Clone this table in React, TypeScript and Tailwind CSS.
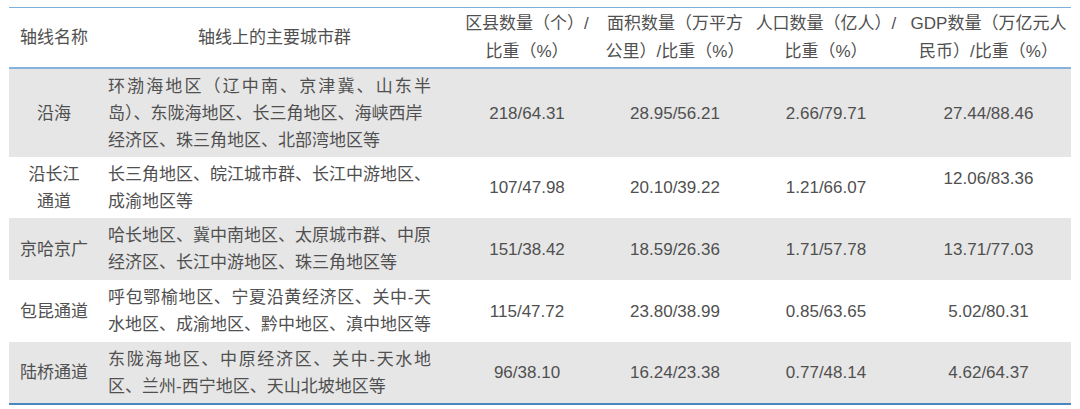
import React from 'react';

type Row = {
  name: string[];
  cities: { text: string; justify?: boolean }[];
  county: string;
  area: string;
  people: string;
  gdp: string;
  gray: boolean;
  height: string;
  gdpTop?: boolean;
};

const rows: Row[] = [
  {
    name: ['沿海'],
    cities: [
      { text: '环渤海地区（辽中南、京津冀、山东半', justify: true },
      { text: '岛）、东陇海地区、长三角地区、海峡西岸' },
      { text: '经济区、珠三角地区、北部湾地区等' },
    ],
    county: '218/64.31',
    area: '28.95/56.21',
    people: '2.66/79.71',
    gdp: '27.44/88.46',
    gray: true,
    height: 'h-[88px]',
  },
  {
    name: ['沿长江', '通道'],
    cities: [{ text: '长三角地区、皖江城市群、长江中游地区、' }, { text: '成渝地区等' }],
    county: '107/47.98',
    area: '20.10/39.22',
    people: '1.21/66.07',
    gdp: '12.06/83.36',
    gray: false,
    height: 'h-[61px]',
    gdpTop: true,
  },
  {
    name: ['京哈京广'],
    cities: [{ text: '哈长地区、冀中南地区、太原城市群、中原' }, { text: '经济区、长江中游地区、珠三角地区等' }],
    county: '151/38.42',
    area: '18.59/26.36',
    people: '1.71/57.78',
    gdp: '13.71/77.03',
    gray: true,
    height: 'h-[62px]',
  },
  {
    name: ['包昆通道'],
    cities: [
      { text: '呼包鄂榆地区、宁夏沿黄经济区、关中-天', justify: true },
      { text: '水地区、成渝地区、黔中地区、滇中地区等' },
    ],
    county: '115/47.72',
    area: '23.80/38.99',
    people: '0.85/63.65',
    gdp: '5.02/80.31',
    gray: false,
    height: 'h-[62px]',
  },
  {
    name: ['陆桥通道'],
    cities: [
      { text: '东陇海地区、中原经济区、关中-天水地', justify: true },
      { text: '区、兰州-西宁地区、天山北坡地区等' },
    ],
    county: '96/38.10',
    area: '16.24/23.38',
    people: '0.77/48.14',
    gdp: '4.62/64.37',
    gray: true,
    height: 'h-[61px]',
  },
];

const cols = 'grid grid-cols-[90px_351px_154px_142px_160px_165px]';

export default function App() {
  return (
    <div className="w-[1080px] h-[409px] bg-white pt-[7px] pl-[9px] font-['Liberation_Sans','Noto_Sans_CJK_SC',sans-serif] text-[17px] text-[#505050]">
      <div className="w-[1062px]">
        {/* header */}
        <div className={`${cols} h-[62px] border-t border-b-2 border-t-[#7eaedb] border-b-[#86b3dd] leading-[28px] text-center`}>
          <div className="flex items-center justify-center">轴线名称</div>
          <div className="flex items-center justify-center">轴线上的主要城市群</div>
          <div className="flex flex-col items-center justify-center">
            <span>区县数量（个）/</span>
            <span>比重（%）</span>
          </div>
          <div className="flex flex-col items-center justify-center">
            <span>面积数量（万平方</span>
            <span>公里）/比重（%）</span>
          </div>
          <div className="flex flex-col items-center justify-center">
            <span>人口数量（亿人）/</span>
            <span>比重（%）</span>
          </div>
          <div className="flex flex-col items-center justify-center">
            <span>GDP数量（万亿元人</span>
            <span>民币）/比重（%）</span>
          </div>
        </div>

        {rows.map((r, i) => (
          <div
            key={i}
            className={`${cols} ${r.height} ${r.gray ? 'bg-[#e6e6e6]' : 'bg-white'} leading-[27px]`}
          >
            <div className="flex flex-col items-center justify-center">
              {r.name.map((n) => (
                <span key={n}>{n}</span>
              ))}
            </div>
            <div className="flex flex-col justify-center pl-[9px]">
              {r.cities.map((c) => (
                <div
                  key={c.text}
                  className={c.justify ? 'w-[323px] text-justify [text-align-last:justify]' : 'whitespace-nowrap'}
                >
                  {c.text}
                </div>
              ))}
            </div>
            <div className="flex items-center justify-center">{r.county}</div>
            <div className="flex items-center justify-center">{r.area}</div>
            <div className="flex items-center justify-center">{r.people}</div>
            <div className={`flex justify-center ${r.gdpTop ? 'items-start pt-[8px]' : 'items-center'}`}>{r.gdp}</div>
          </div>
        ))}
        <div className="h-[2px] bg-[#4a86bf]" />
      </div>
    </div>
  );
}
